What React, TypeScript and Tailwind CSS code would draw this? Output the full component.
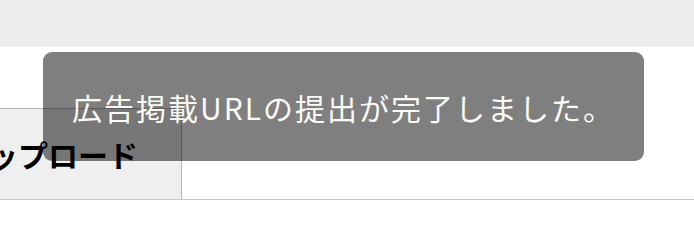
export default function App() {
    return (
        <main className="relative w-[694px] h-[234px] overflow-hidden bg-white" style={{ fontFamily: '"Noto Sans CJK JP", "Noto Sans", sans-serif' }}>
            {/* top bar */}
            <div className="h-[47px] bg-[#ececec]"></div>
            <div className="h-[61px]"></div>

            {/* upload row */}
            <div className="flex h-[92px] border-b border-[#c6c6cc]">
                <div className="w-[182px] shrink-0 flex items-center justify-end pr-[43px] overflow-hidden whitespace-nowrap bg-[#efefef] border-t border-r border-[#b4b4b4]">
                    <span className="text-[30px] font-bold text-black leading-none">アップロード</span>
                </div>
                <div className="flex-1"></div>
            </div>

            {/* toast */}
            <div className="absolute left-[43px] top-[52px] w-[601px] h-[109px] rounded-[9px] bg-black/50 flex items-center pl-[29px]">
                <p className="text-[30px] leading-none text-[#fbfbf5] tracking-[2px] whitespace-nowrap">
                    広告掲載URLの提出が完了しました。
                </p>
            </div>
        </main>
    );
}
